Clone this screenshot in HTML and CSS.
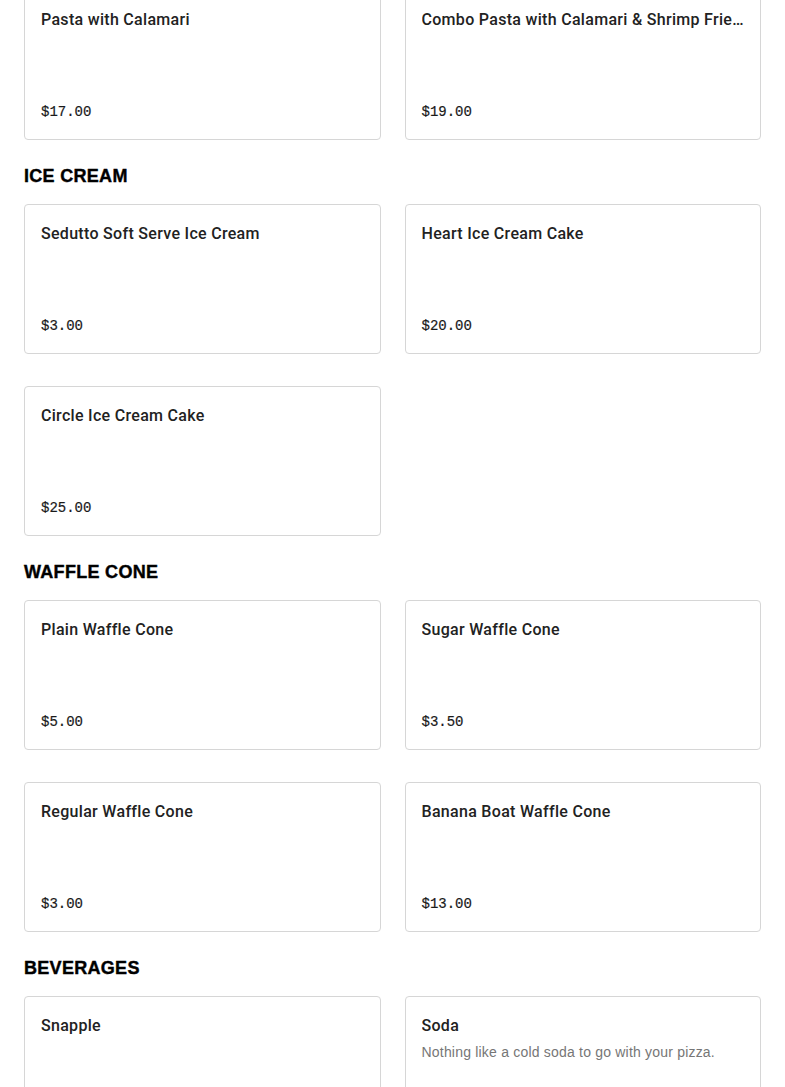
FILE: index.html
```html
<!DOCTYPE html>
<html>
<head>
    <meta charset="UTF-8">
    <title>Menu</title>
    <link rel="stylesheet" href="styles.css">
</head>
<body>
    <div class="menu">
        <div class="section section-first">
            <div class="items">
                <div class="item">
                    <div class="item-name">Pasta with Calamari</div>
                    <div class="item-price">$17.00</div>
                </div>
                <div class="item">
                    <div class="item-name">Combo Pasta with Calamari &amp; Shrimp Fried Rice</div>
                    <div class="item-price">$19.00</div>
                </div>
            </div>
        </div>

        <div class="section">
            <h2 class="section-title">ICE CREAM</h2>
            <div class="items">
                <div class="item">
                    <div class="item-name">Sedutto Soft Serve Ice Cream</div>
                    <div class="item-price">$3.00</div>
                </div>
                <div class="item">
                    <div class="item-name">Heart Ice Cream Cake</div>
                    <div class="item-price">$20.00</div>
                </div>
                <div class="item">
                    <div class="item-name">Circle Ice Cream Cake</div>
                    <div class="item-price">$25.00</div>
                </div>
            </div>
        </div>

        <div class="section">
            <h2 class="section-title">WAFFLE CONE</h2>
            <div class="items">
                <div class="item">
                    <div class="item-name">Plain Waffle Cone</div>
                    <div class="item-price">$5.00</div>
                </div>
                <div class="item">
                    <div class="item-name">Sugar Waffle Cone</div>
                    <div class="item-price">$3.50</div>
                </div>
                <div class="item">
                    <div class="item-name">Regular Waffle Cone</div>
                    <div class="item-price">$3.00</div>
                </div>
                <div class="item">
                    <div class="item-name">Banana Boat Waffle Cone</div>
                    <div class="item-price">$13.00</div>
                </div>
            </div>
        </div>

        <div class="section">
            <h2 class="section-title">BEVERAGES</h2>
            <div class="items">
                <div class="item">
                    <div class="item-name">Snapple</div>
                    <div class="item-price">$2.50</div>
                </div>
                <div class="item">
                    <div class="item-name">Soda</div>
                    <div class="item-desc">Nothing like a cold soda to go with your pizza.</div>
                    <div class="item-price">$2.00</div>
                </div>
            </div>
        </div>
    </div>
</body>
</html>
```

FILE: styles.css
```css
body {
    margin: 0;
    background: #fff;
    font-family: "Liberation Sans", Arial, sans-serif;
    color: #222;
}

.menu {
    padding: 0 24px;
}

.section-first {
    margin-top: -10px;
}

.section-title {
    margin: 24px 0 16px;
    font-size: 18px;
    line-height: 24px;
    font-weight: 700;
    color: #000;
    letter-spacing: 0.3px;
    -webkit-text-stroke: 0.4px #000;
}

.items {
    display: grid;
    grid-template-columns: 1fr 1fr;
    gap: 32px 24px;
}

.item {
    min-width: 0;
    height: 150px;
    box-sizing: border-box;
    padding: 17px 16px 15px;
    border: 1px solid #d6d6d6;
    border-radius: 4px;
    display: flex;
    flex-direction: column;
}

.item-name {
    font-family: Roboto, "Liberation Sans", sans-serif;
    font-size: 16px;
    line-height: 24px;
    font-weight: 500;
    letter-spacing: 0.3px;
    color: #222;
    white-space: nowrap;
    overflow: hidden;
    text-overflow: ellipsis;
}

.item-desc {
    margin-top: 4px;
    font-size: 14px;
    line-height: 20px;
    color: #767676;
    letter-spacing: 0.2px;
}

.item-price {
    margin-top: auto;
    font-family: "Liberation Mono", "Courier New", monospace;
    font-size: 14px;
    line-height: 24px;
    color: #1a1a1a;
    -webkit-text-stroke: 0.2px #1a1a1a;
}
```
